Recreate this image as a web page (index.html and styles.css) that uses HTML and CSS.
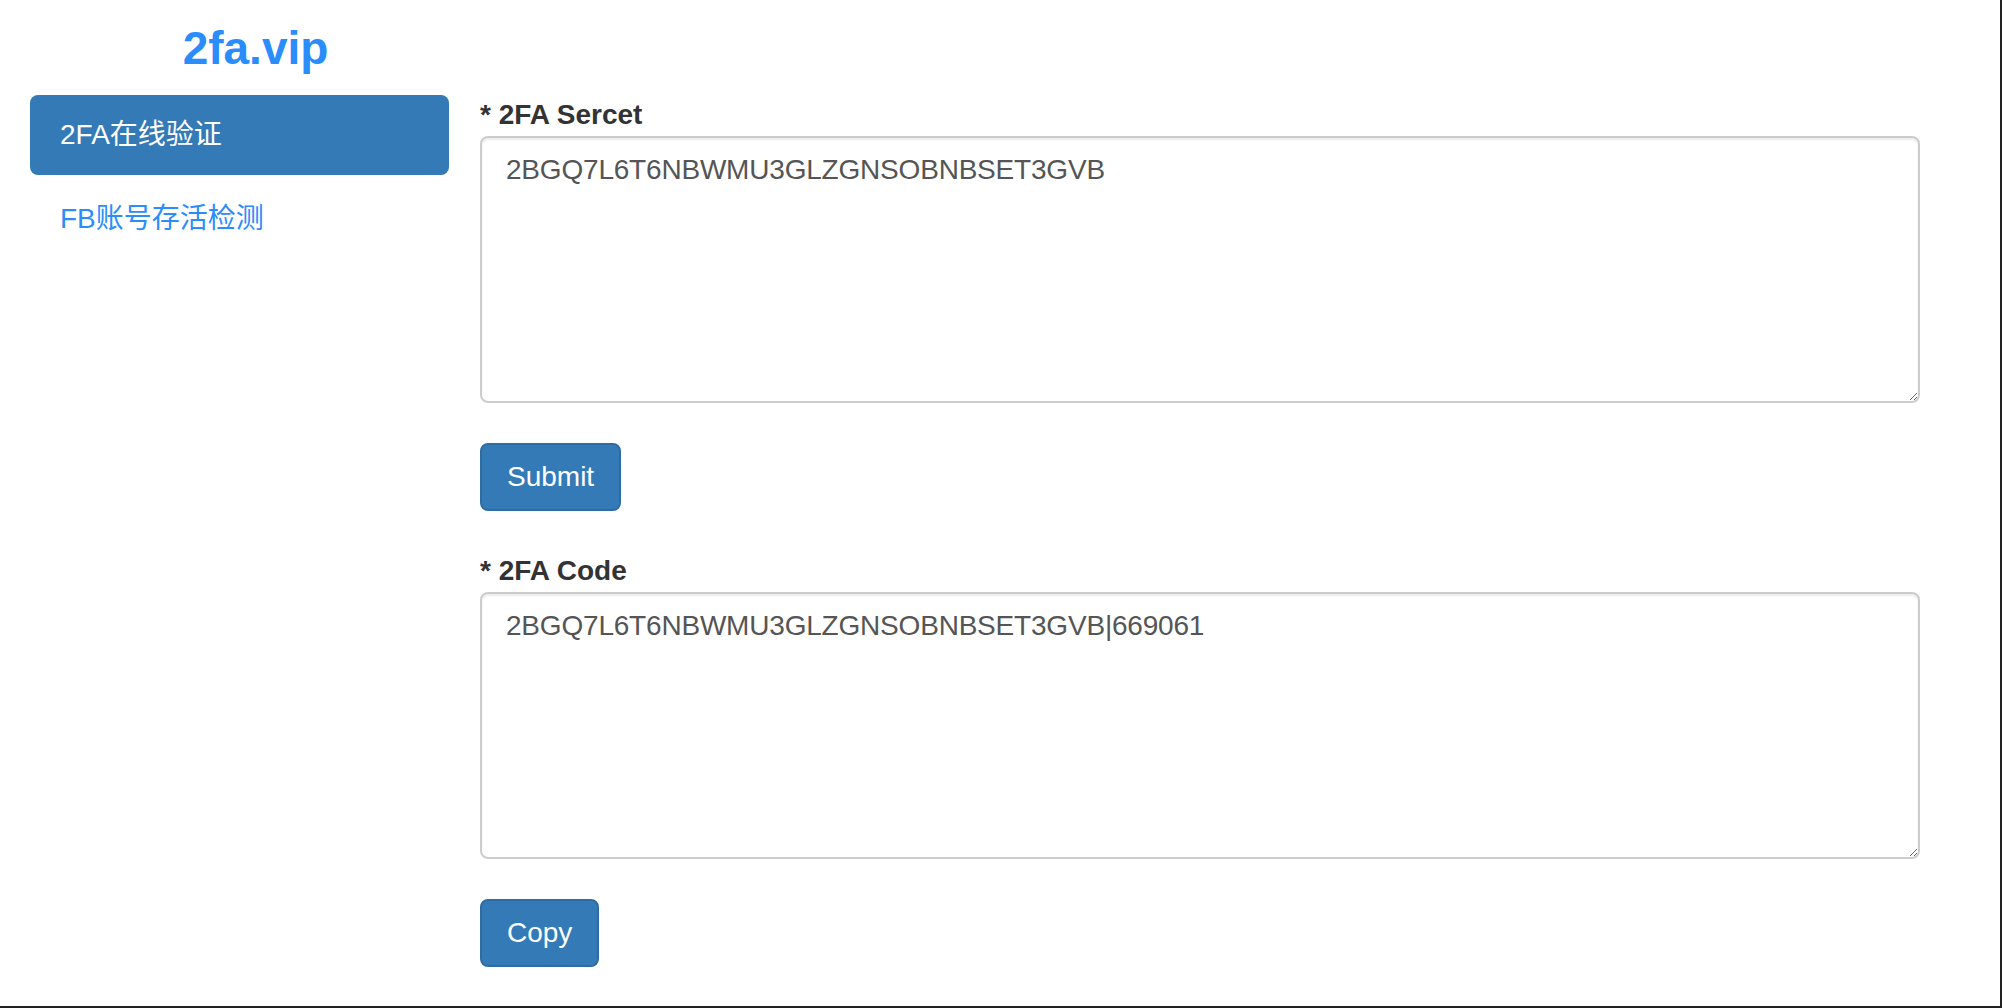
FILE: index.html
```html
<!DOCTYPE html>
<html lang="zh-CN">
<head>
<meta charset="utf-8">
<title>2fa.vip</title>
<link rel="stylesheet" href="styles.css">
</head>
<body>
<div class="page">
  <aside class="sidebar">
    <div class="logo">2fa.vip</div>
    <nav class="nav">
      <a class="nav-item active" href="#">2FA在线验证</a>
      <a class="nav-item" href="#">FB账号存活检测</a>
    </nav>
  </aside>
  <main class="main">
    <form class="form">
      <div class="form-group">
        <label class="label" for="secret">* 2FA Sercet</label>
        <textarea id="secret" class="field">2BGQ7L6T6NBWMU3GLZGNSOBNBSET3GVB</textarea>
      </div>
      <button type="button" class="btn">Submit</button>
      <div class="form-group">
        <label class="label" for="code">* 2FA Code</label>
        <textarea id="code" class="field">2BGQ7L6T6NBWMU3GLZGNSOBNBSET3GVB|669061</textarea>
      </div>
      <button type="button" class="btn">Copy</button>
    </form>
  </main>
</div>
</body>
</html>
```

FILE: styles.css
```css
html, body {
  margin: 0;
  padding: 0;
  background: #fff;
}

body {
  font-family: "Liberation Sans", "Noto Sans CJK SC", Arial, sans-serif;
  color: #333;
}

.page {
  display: flex;
  width: 2000px;
  height: 1006px;
  border-right: 2px solid #222;
  border-bottom: 2px solid #222;
  overflow: hidden;
  background: #fff;
}

.sidebar {
  width: 480px;
  flex: 0 0 480px;
  box-sizing: border-box;
  padding: 23px 31px 0 30px;
}

.logo {
  font-size: 46px;
  line-height: 50px;
  font-weight: bold;
  color: #2b8cfb;
  text-align: center;
  padding-left: 32px;
  margin-bottom: 22px;
}

.nav {
  display: flex;
  flex-direction: column;
  gap: 4px;
}

.nav-item {
  display: block;
  padding: 20px 30px;
  font-size: 28px;
  line-height: 40px;
  border-radius: 8px;
  color: #2b8cfb;
  text-decoration: none;
}

.nav-item.active {
  background: #337ab7;
  color: #fff;
}

.main {
  flex: 1;
  box-sizing: border-box;
  padding: 95px 80px 0 0;
}

.form {
  display: flex;
  flex-direction: column;
  align-items: flex-start;
  gap: 40px;
}

.form-group {
  width: 100%;
  display: flex;
  flex-direction: column;
}

.label {
  font-size: 28px;
  line-height: 40px;
  font-weight: bold;
  color: #333;
  margin-bottom: 1px;
}

.field {
  display: block;
  width: 100%;
  height: 267px;
  box-sizing: border-box;
  padding: 12px 24px;
  font-family: "Liberation Sans", "Noto Sans CJK SC", Arial, sans-serif;
  font-size: 28px;
  line-height: 40px;
  letter-spacing: -0.2px;
  color: #555;
  background: #fff;
  border: 2px solid #ccc;
  border-radius: 8px;
  box-shadow: inset 0 2px 2px rgba(0, 0, 0, 0.075);
  resize: vertical;
  outline: none;
  margin: 0;
}

.btn {
  display: inline-block;
  box-sizing: border-box;
  height: 68px;
  padding: 12px 25px;
  font-family: "Liberation Sans", Arial, sans-serif;
  font-size: 28px;
  line-height: 40px;
  color: #fff;
  background: #337ab7;
  border: 2px solid #2e6da4;
  border-radius: 8px;
  cursor: pointer;
  margin: 0;
}
```
